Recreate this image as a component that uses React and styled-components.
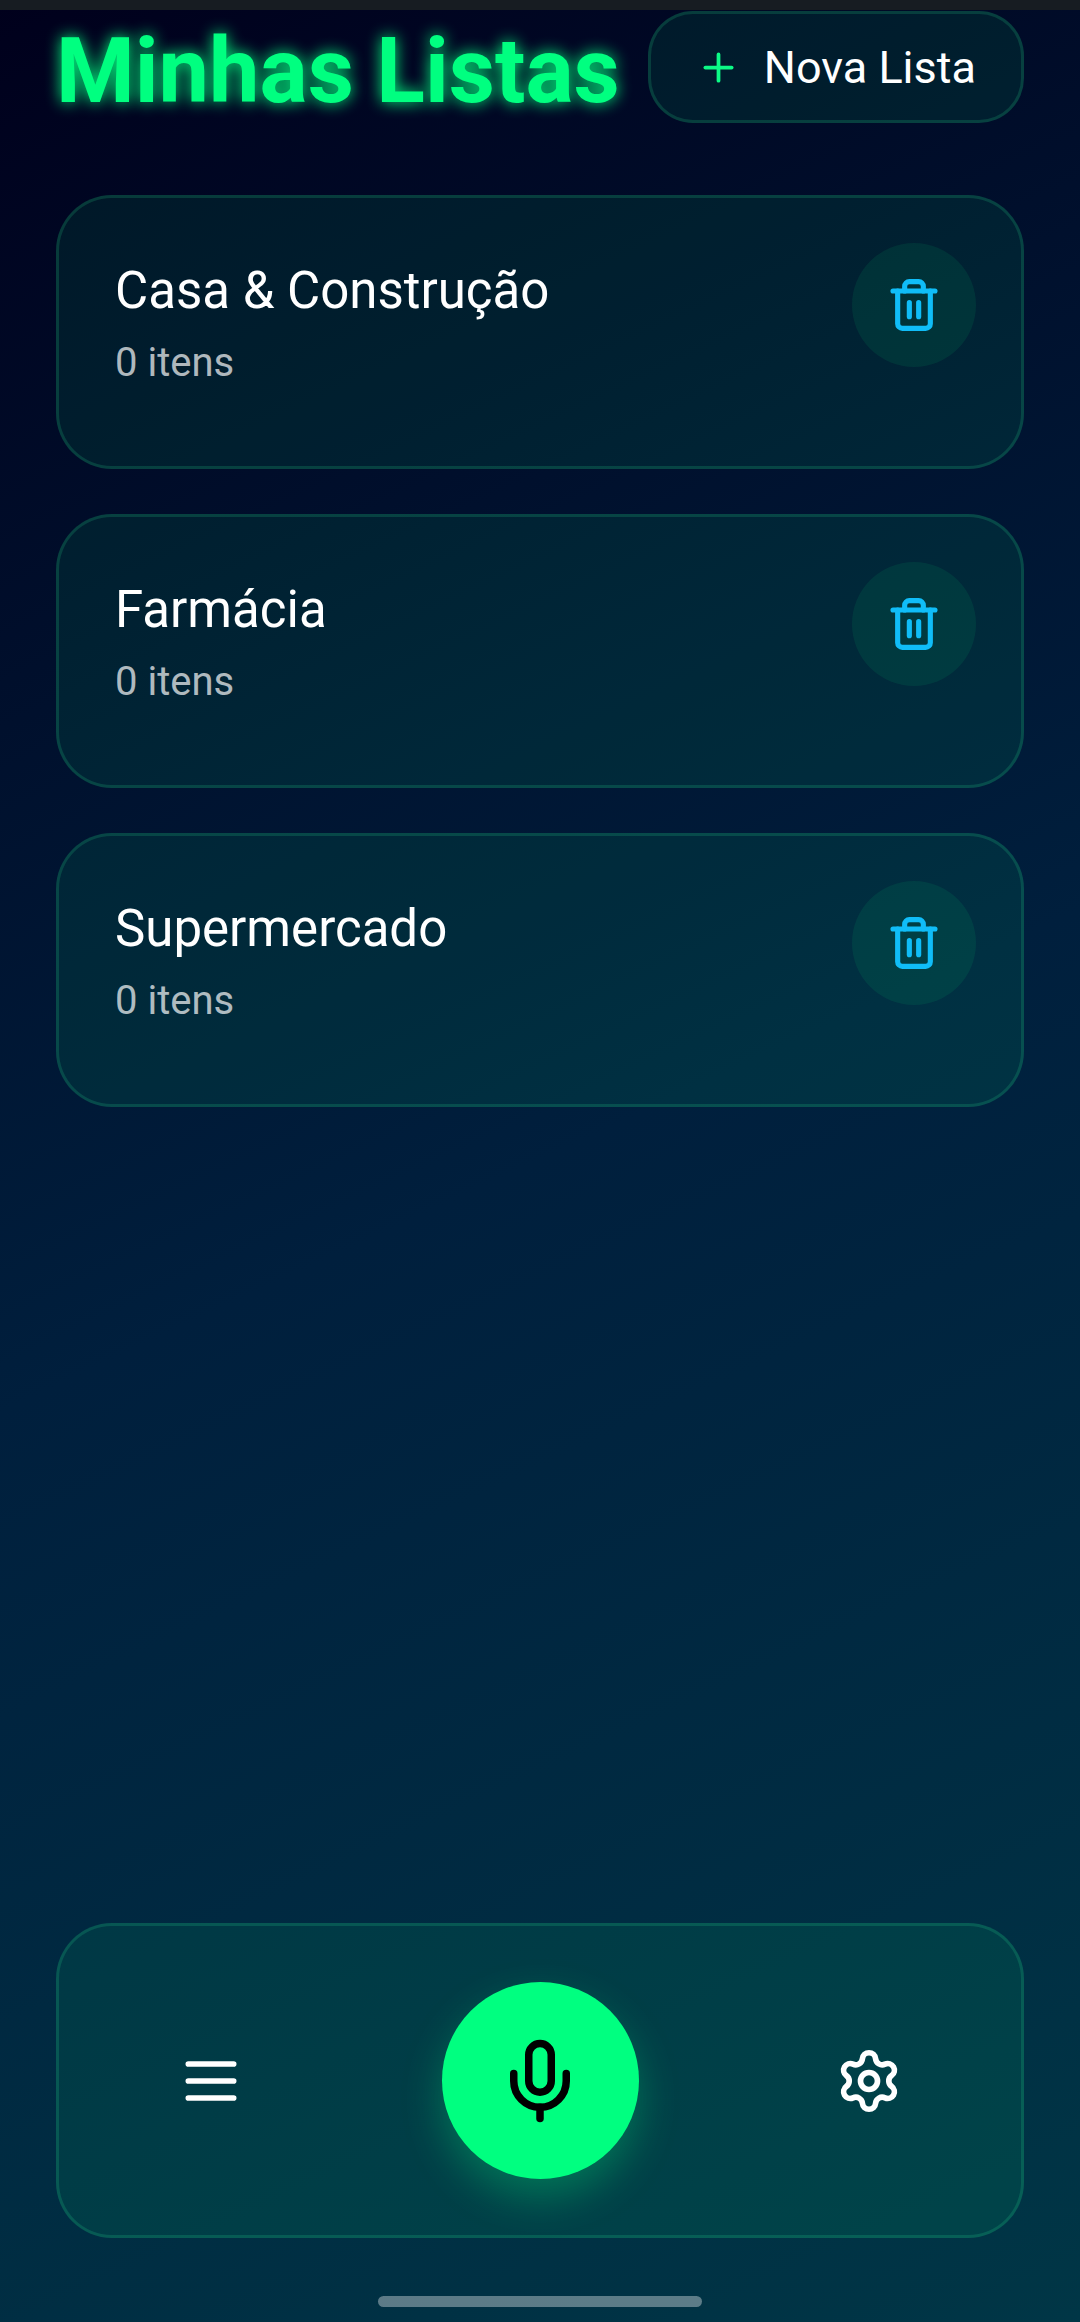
import React, { useState } from "react";
import styled, { createGlobalStyle } from "styled-components";
import { Mic, Plus, Settings, Trash2 } from "lucide-react";

const GlobalStyle = createGlobalStyle`
  *, *::before, *::after { box-sizing: border-box; }
  body {
    margin: 0;
    background: #001c38;
    font-family: Roboto, "Noto Sans", sans-serif;
  }
  button { font: inherit; cursor: pointer; }
  svg { display: block; flex: none; }
`;

const Screen = styled.div`
  min-height: 100vh;
  display: flex;
  flex-direction: column;
  color: #ffffff;
  background: linear-gradient(155deg, #00001c 0%, #001f3d 50%, #003646 100%);
`;

const StatusStrip = styled.div`
  height: 10px;
  background: #171c22;
`;

const Content = styled.main`
  flex: 1;
  display: flex;
  flex-direction: column;
  gap: 72px;
  padding: 1px 56px 56px;
`;

const Header = styled.header`
  display: flex;
  align-items: flex-end;
  justify-content: space-between;
  gap: 16px;
`;

const Title = styled.h1`
  margin: 0;
  font-size: 90px;
  line-height: 102px;
  font-weight: 700;
  white-space: nowrap;
  color: #00ff80;
  text-shadow: 0 0 16px #00ff80;
`;

const glass = `
  background: rgba(0, 255, 128, 0.08);
  border: 3px solid rgba(50, 255, 160, 0.15);
`;

const NewListButton = styled.button`
  ${glass}
  display: flex;
  align-items: center;
  gap: 23px;
  height: 112px;
  padding: 0 45px;
  border-radius: 45px;
  color: #ffffff;
  font-size: 45px;
  line-height: 52px;
  white-space: nowrap;
`;

const ButtonLabel = styled.span`
  padding-top: 2px;
`;

const Lists = styled.ul`
  display: flex;
  flex-direction: column;
  gap: 45px;
  margin: 0;
  padding: 0;
  list-style: none;
`;

const Card = styled.li`
  ${glass}
  display: flex;
  align-items: flex-start;
  justify-content: space-between;
  padding: 45px 45px 79px 56px;
  border-radius: 56px;
`;

const CardText = styled.div`
  display: flex;
  flex-direction: column;
  gap: 18px;
  padding-top: 18px;
`;

const CardTitle = styled.h2`
  margin: 0;
  font-size: 51px;
  line-height: 60px;
  font-weight: 400;
`;

const CardCount = styled.p`
  margin: 0;
  font-size: 40px;
  line-height: 48px;
  color: rgba(255, 255, 255, 0.7);
`;

const DeleteButton = styled.button`
  display: grid;
  place-items: center;
  width: 124px;
  height: 124px;
  padding: 0;
  border: 0;
  border-radius: 50%;
  color: #10bdf8;
  background: rgba(0, 255, 128, 0.08);
`;

const Dock = styled.nav`
  ${glass}
  display: flex;
  align-items: center;
  justify-content: space-between;
  margin: 0 56px;
  padding: 56px 96px;
  border-radius: 56px;
`;

const DockButton = styled.button`
  display: grid;
  place-items: center;
  width: 112px;
  height: 112px;
  padding: 0;
  border: 0;
  color: #ffffff;
  background: none;
`;

const MicButton = styled.button`
  display: grid;
  place-items: center;
  width: 197px;
  height: 197px;
  padding: 0;
  border: 0;
  border-radius: 50%;
  color: #000000;
  background: #00ff80;
  box-shadow: 0 18px 40px rgba(0, 255, 128, 0.28);
`;

const HomeIndicator = styled.div`
  align-self: center;
  width: 30%;
  height: 11px;
  margin: 58px 0 15px;
  border-radius: 6px;
  background: rgba(255, 255, 255, 0.36);
`;

function MenuIcon({ size }) {
  return (
    <svg
      width={size}
      height={size}
      viewBox="0 0 24 24"
      fill="none"
      stroke="currentColor"
      strokeWidth="2"
      strokeLinecap="round"
      aria-hidden="true"
    >
      <path d="M4 6h16M4 12h16M4 18h16" />
    </svg>
  );
}

const initialLists = [
  { id: "casa", name: "Casa & Construção", items: 0 },
  { id: "farmacia", name: "Farmácia", items: 0 },
  { id: "supermercado", name: "Supermercado", items: 0 },
];

export default function App() {
  const [lists, setLists] = useState(initialLists);
  const remove = (id) => setLists((all) => all.filter((l) => l.id !== id));

  return (
    <>
      <GlobalStyle />
      <Screen>
        <StatusStrip />
        <Content>
          <Header>
            <Title>Minhas Listas</Title>
            <NewListButton type="button">
              <Plus size={45} color="#0cfa86" />
              <ButtonLabel>Nova Lista</ButtonLabel>
            </NewListButton>
          </Header>
          <Lists>
            {lists.map((list) => (
              <Card key={list.id}>
                <CardText>
                  <CardTitle>{list.name}</CardTitle>
                  <CardCount>{list.items} itens</CardCount>
                </CardText>
                <DeleteButton
                  type="button"
                  aria-label={`Excluir ${list.name}`}
                  onClick={() => remove(list.id)}
                >
                  <Trash2 size={56} strokeWidth={2.2} />
                </DeleteButton>
              </Card>
            ))}
          </Lists>
        </Content>
        <Dock>
          <DockButton type="button" aria-label="Menu">
            <MenuIcon size={68} />
          </DockButton>
          <MicButton type="button" aria-label="Falar">
            <Mic size={90} />
          </MicButton>
          <DockButton type="button" aria-label="Configurações">
            <Settings size={68} />
          </DockButton>
        </Dock>
        <HomeIndicator />
      </Screen>
    </>
  );
}
